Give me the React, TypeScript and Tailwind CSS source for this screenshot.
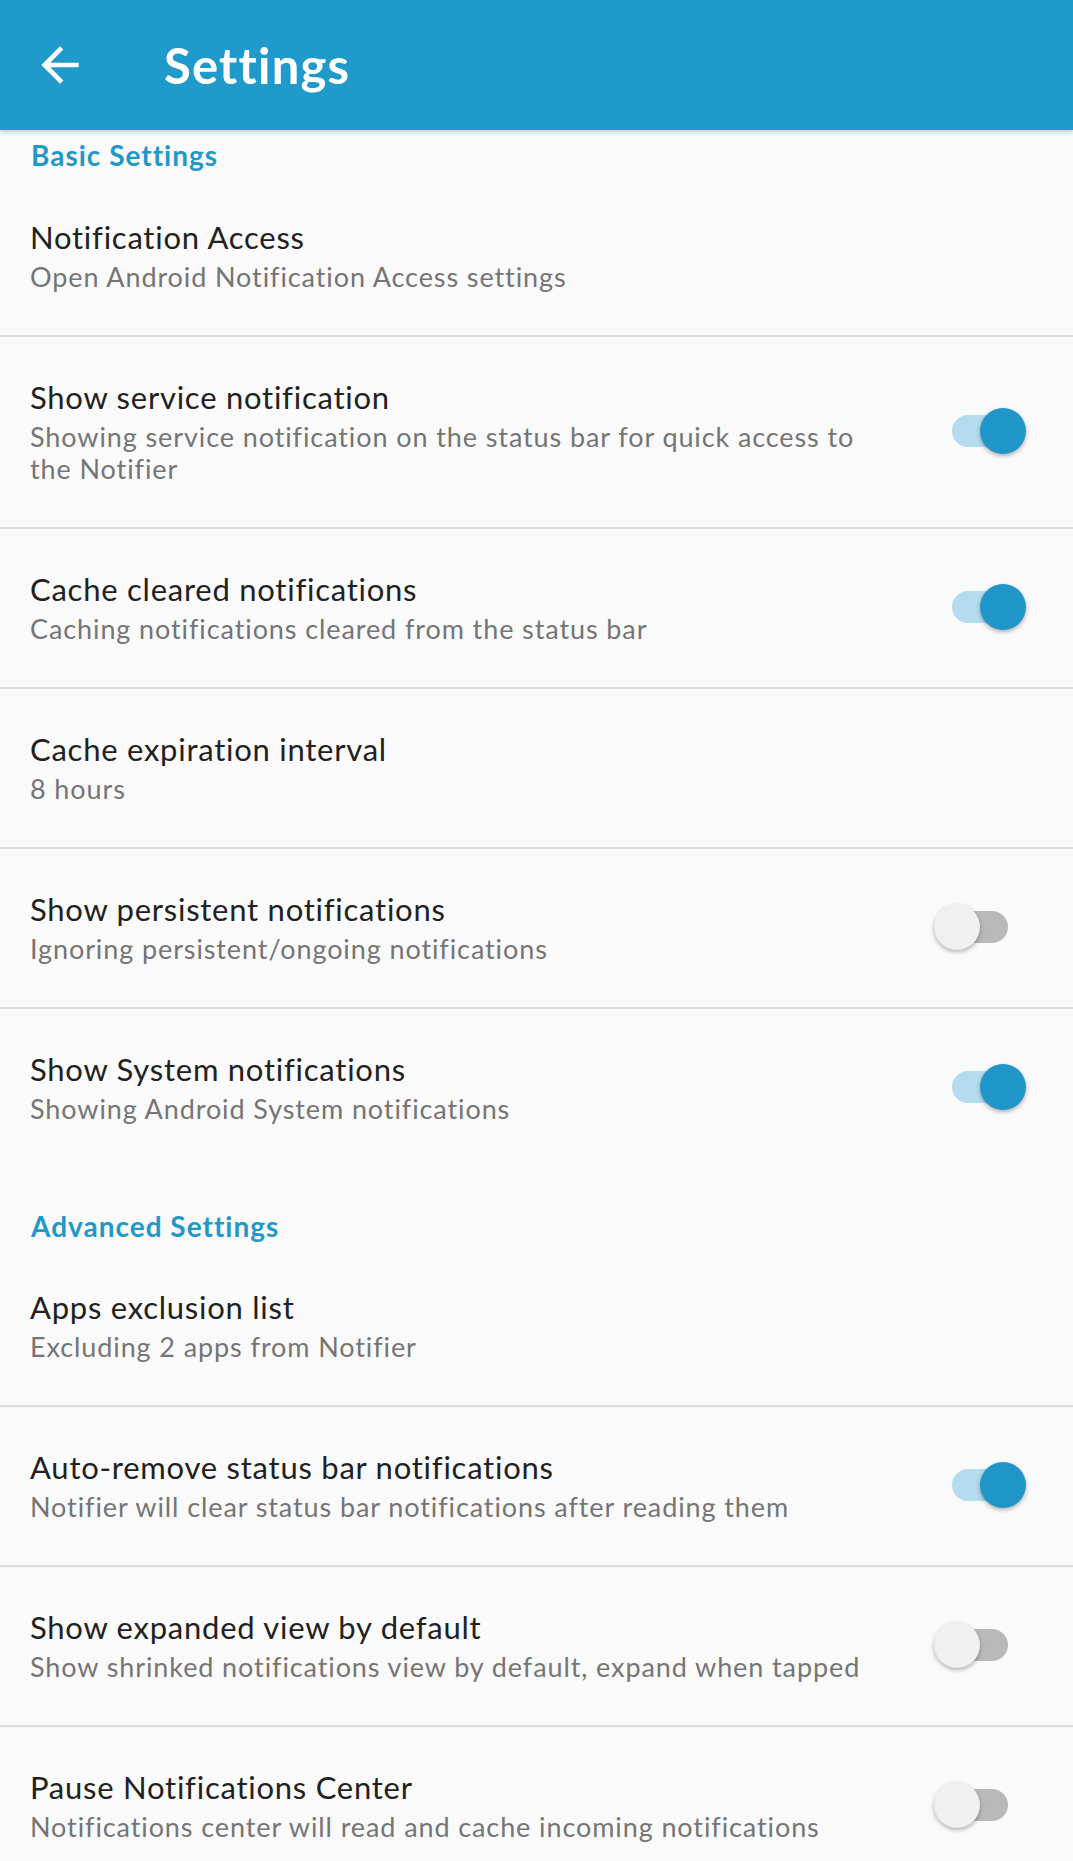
import React from 'react'

type Item = { title: string; sub: string[]; toggle?: 'on' | 'off'; divider?: boolean }

const basic: Item[] = [
  { title: 'Notification Access', sub: ['Open Android Notification Access settings'], divider: true },
  {
    title: 'Show service notification',
    sub: ['Showing service notification on the status bar for quick access to', 'the Notifier'],
    toggle: 'on',
    divider: true,
  },
  { title: 'Cache cleared notifications', sub: ['Caching notifications cleared from the status bar'], toggle: 'on', divider: true },
  { title: 'Cache expiration interval', sub: ['8 hours'], divider: true },
  { title: 'Show persistent notifications', sub: ['Ignoring persistent/ongoing notifications'], toggle: 'off', divider: true },
  { title: 'Show System notifications', sub: ['Showing Android System notifications'], toggle: 'on' },
]

const advanced: Item[] = [
  { title: 'Apps exclusion list', sub: ['Excluding 2 apps from Notifier'], divider: true },
  {
    title: 'Auto-remove status bar notifications',
    sub: ['Notifier will clear status bar notifications after reading them'],
    toggle: 'on',
    divider: true,
  },
  {
    title: 'Show expanded view by default',
    sub: ['Show shrinked notifications view by default, expand when tapped'],
    toggle: 'off',
    divider: true,
  },
  { title: 'Pause Notifications Center', sub: ['Notifications center will read and cache incoming notifications'], toggle: 'off' },
]

function Toggle({ on }: { on: boolean }) {
  if (on) {
    return (
      <div className="w-[100px] shrink-0 flex items-center pl-[22px]">
        <div className="w-[68px] h-[32px] rounded-full bg-[#b4dcee]" />
        <div className="-ml-[40px] w-[46px] h-[46px] rounded-full bg-[#1f95c8] shadow-[0_2px_4px_rgba(0,0,0,0.3)]" />
      </div>
    )
  }
  return (
    <div className="w-[100px] shrink-0 flex items-center pl-[4px]">
      <div className="relative z-10 w-[46px] h-[46px] rounded-full bg-[#f0f0f0] shadow-[0_2px_4px_rgba(0,0,0,0.3)]" />
      <div className="-ml-[40px] w-[68px] h-[32px] rounded-full bg-[#b9b9b9]" />
    </div>
  )
}

function Row({ item }: { item: Item }) {
  return (
    <div>
      <div className="flex items-center pl-[30px] pr-[43px] pt-[40px] pb-[42px]">
        <div className="flex-1 min-w-0 pr-[40px]">
          <div className="text-[31px] leading-[40px] tracking-[0.75px] text-[#212121]">{item.title}</div>
          <div className="mt-[4px] text-[27px] leading-[32px] tracking-[0.9px] text-[#757575]">
            {item.sub.map((s, i) => (
              <div key={i} className="whitespace-nowrap">
                {s}
              </div>
            ))}
          </div>
        </div>
        {item.toggle && <Toggle on={item.toggle === 'on'} />}
      </div>
      {item.divider && <div className="h-[2px] bg-[#dddddd]" />}
    </div>
  )
}

export default function App() {
  return (
    <div className="w-[1073px] h-[1861px] overflow-hidden bg-[#fafafa]" style={{ fontFamily: 'Lato, "Open Sans", sans-serif' }}>
      {/* Toolbar */}
      <div className="relative z-10 h-[130px] bg-[#1f9acb] flex items-center shadow-[0_2px_4px_rgba(0,0,0,0.2)]">
        <div className="w-[56px] h-[56px] ml-[32px]">
          <svg viewBox="0 0 24 24" width="56" height="56" fill="#ffffff">
            <path d="M20 11H7.83l5.59-5.59L12 4l-8 8 8 8 1.41-1.41L7.83 13H20v-2z" />
          </svg>
        </div>
        <div className="ml-[76px] text-[49px] font-bold tracking-[1.2px] text-white leading-none">Settings</div>
      </div>

      {/* Basic */}
      <div className="h-[47px] pl-[31px] pt-[9px] text-[28px] leading-[32px] tracking-[1px] font-bold text-[#2298c8]">
        Basic Settings
      </div>
      {basic.map((item, i) => (
        <Row key={i} item={item} />
      ))}

      {/* Advanced */}
      <div className="h-[80px] pl-[31px] pt-[43px] text-[28px] leading-[32px] tracking-[1px] font-bold text-[#2298c8]">
        Advanced Settings
      </div>
      {advanced.map((item, i) => (
        <Row key={i} item={item} />
      ))}
    </div>
  )
}
